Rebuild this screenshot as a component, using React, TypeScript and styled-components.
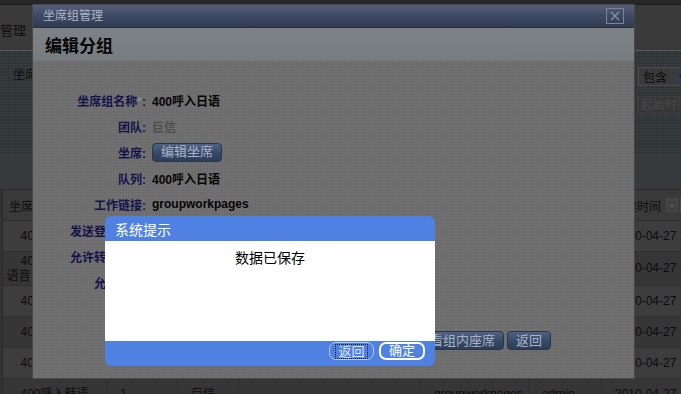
import React from 'react'
import styled, { createGlobalStyle } from 'styled-components'

const GlobalStyle = createGlobalStyle`
  html, body {
    margin: 0;
    padding: 0;
  }
  body {
    width: 681px;
    height: 394px;
    overflow: hidden;
    background: #333;
    font-family: 'Liberation Sans', 'Noto Sans CJK SC', sans-serif;
    font-size: 12px;
  }
`

const dots = `
  background-image: radial-gradient(circle, rgba(255, 255, 255, 0.07) 0.8px, transparent 1.1px);
  background-size: 3px 3px;
`

const Screen = styled.div`
  position: relative;
  width: 681px;
  height: 394px;
  overflow: hidden;
`

/* ---------- page underneath (already dimmed) ---------- */

const Page = styled.div`
  display: flex;
  flex-direction: column;
  width: 681px;
`

const TopStrip = styled.div`
  height: 4px;
  background: #272727;
  border-bottom: 1px solid #1b1b1b;
`

const PageHeader = styled.div`
  box-sizing: border-box;
  height: 46px;
  padding-top: 7px;
  display: flex;
  align-items: center;
  background: #3a3a3a;
  border-bottom: 1px solid #5c5c5c;
`

const PageTitle = styled.h1`
  margin: 0;
  font-size: 13px;
  font-weight: normal;
  color: #0d0d0d;
  line-height: 16px;
`

const FilterPanel = styled.div`
  height: 104px;
  display: flex;
  justify-content: space-between;
  background-color: #2f3437;
  ${dots}
`

const FilterLabel = styled.span`
  padding: 16px 0 0 13px;
  line-height: 17px;
  color: #0b0b0b;
`

const FilterSide = styled.div`
  width: 43px;
  padding-top: 16px;
  display: flex;
  flex-direction: column;
  gap: 10px;
  overflow: hidden;
`

const Select = styled.div`
  box-sizing: border-box;
  width: 60px;
  height: 19px;
  display: flex;
  align-items: center;
  border: 1px solid #4c4c4c;
  background: #3a3a3a;
  color: #080808;
  font-size: 12px;
  padding-left: 4px;
  gap: 7px;
`

const SelectArrow = styled.span`
  width: 14px;
  height: 15px;
  background: #363c48;
  color: #1f2530;
  font-size: 8px;
  line-height: 15px;
  text-align: center;
`

const DateInput = styled.div`
  box-sizing: border-box;
  width: 60px;
  height: 18px;
  border: 1px solid #404040;
  background: #363636;
  color: #4a4a4a;
  padding-left: 2px;
  line-height: 16px;
  white-space: nowrap;
`

const Toolbar = styled.div`
  height: 34px;
  background: #363a3c;
  border-bottom: 1px solid #2c2c2c;
`

const TableGrid = styled.div`
  display: grid;
  grid-template-columns: 104px 71px 61px 182px 108px 73px 160px;
  margin-left: 2px;
  border-left: 1px solid #2a2a2a;
`

const HeadCell = styled.div<{ $pad?: number }>`
  height: 30px;
  display: flex;
  align-items: center;
  justify-content: ${p => (p.$pad !== undefined ? 'flex-start' : 'center')};
  padding-left: ${p => p.$pad ?? 0}px;
  gap: 5px;
  background: #3a3a3a;
  border-right: 1px solid #303030;
  border-bottom: 1px solid #2e2e2e;
  color: #0c0c0c;
  white-space: nowrap;
`

const Cell = styled.div<{ $odd: boolean; $h: number; $center?: boolean }>`
  height: ${p => p.$h}px;
  box-sizing: border-box;
  display: flex;
  align-items: center;
  justify-content: ${p => (p.$center ? 'center' : 'flex-start')};
  text-align: ${p => (p.$center ? 'center' : 'left')};
  padding-left: ${p => (p.$center ? 0 : 13)}px;
  background: ${p => (p.$odd ? '#3d3d3d' : '#363636')};
  border-right: 1px solid #2e2e2e;
  border-bottom: 1px solid #303030;
  color: #0c0c0c;
  line-height: 15px;
  white-space: nowrap;
`

const SortPair = styled.span`
  display: inline-flex;
  gap: 2px;
`

const SortBox = styled.span`
  width: 10px;
  height: 12px;
  border: 1px solid #4a4a4a;
  background: #414141;
  display: flex;
  align-items: center;
  justify-content: center;
`

/* ---------- edit group modal ---------- */

const Modal = styled.section`
  position: absolute;
  left: 33px;
  top: 5px;
  width: 601px;
  height: 373px;
  display: flex;
  flex-direction: column;
  box-shadow: 0 0 0 1px #474747;
`

const ModalTitleBar = styled.div`
  height: 22px;
  flex: none;
  display: flex;
  align-items: center;
  justify-content: space-between;
  padding: 0 10px;
  background: linear-gradient(#56607a, #3f4a64 45%, #313b54);
  border-bottom: 1px solid #2b2f38;
`

const ModalTitle = styled.span`
  color: #aeb6c6;
  font-size: 12px;
  line-height: 14px;
`

const CloseButton = styled.span`
  box-sizing: border-box;
  width: 18px;
  height: 16px;
  border: 1px solid #7c8498;
  display: flex;
  align-items: center;
  justify-content: center;
`

const ModalHeading = styled.h2`
  margin: 0;
  height: 33px;
  flex: none;
  display: flex;
  align-items: center;
  padding-left: 12px;
  background: linear-gradient(#7d8286, #777c81);
  font-size: 17px;
  font-weight: bold;
  color: #050505;
`

const ModalBody = styled.div`
  flex: 1;
  padding-top: 26px;
  display: flex;
  flex-direction: column;
  background-color: #6c6c6c;
  ${dots}
`

const Form = styled.div`
  display: grid;
  grid-template-columns: 113px auto;
  grid-auto-rows: 26px;
  column-gap: 6px;
  align-items: center;
`

const Label = styled.span`
  text-align: right;
  font-weight: bold;
  color: #14124a;
  white-space: nowrap;
`

const Req = styled.span`
  font-weight: normal;
  color: #9a9aa8;
`

const Value = styled.span<{ $muted?: boolean }>`
  font-weight: bold;
  color: ${p => (p.$muted ? '#4e4e4e' : '#050505')};
  white-space: nowrap;
`

const ButtonBar = styled.div`
  margin-top: 36px;
  padding-right: 83px;
  display: flex;
  justify-content: flex-end;
  gap: 3px;
`

const DarkButton = styled.button`
  height: 19px;
  padding: 0 8px;
  border: 1px solid #2a3548;
  border-radius: 4px;
  background: linear-gradient(#4f6384, #364866 55%, #2d3d5a);
  color: #a9b4c7;
  font-family: inherit;
  font-size: 13px;
  line-height: 16px;
  justify-self: start;
`

/* ---------- system prompt dialog ---------- */

const Prompt = styled.div`
  position: absolute;
  left: 105px;
  top: 216px;
  width: 330px;
  height: 150px;
  display: flex;
  flex-direction: column;
  border-radius: 6px;
  overflow: hidden;
  background: #4f81e2;
`

const PromptTitle = styled.div`
  height: 25px;
  flex: none;
  padding-left: 10px;
  display: flex;
  align-items: center;
  color: #fff;
  font-size: 14px;
`

const PromptBody = styled.div`
  flex: 1;
  background: #fff;
  padding-top: 7px;
  text-align: center;
  font-size: 14px;
  line-height: 20px;
  color: #000;
`

const PromptFooter = styled.div`
  height: 25px;
  flex: none;
  box-sizing: border-box;
  padding: 1px 10px 0 0;
  display: flex;
  justify-content: flex-end;
  align-items: flex-start;
  gap: 5px;
`

const PromptButton = styled.button<{ $primary?: boolean }>`
  box-sizing: border-box;
  width: ${p => (p.$primary ? 46 : 45)}px;
  height: 18px;
  padding: 0;
  display: flex;
  align-items: center;
  justify-content: center;
  border: ${p => (p.$primary ? '2px solid #ffffff' : '1px solid #b6c9f2')};
  border-radius: 7px;
  background: #4f81e2;
  color: ${p => (p.$primary ? '#ffffff' : '#dbe4fa')};
  font-family: inherit;
  font-size: 13px;
  line-height: 14px;
`

const FocusRing = styled.span`
  border: 1px dotted #101010;
  padding: 0 2px;
  line-height: 13px;
`

const SortIcons = () => (
  <SortPair>
    {[0, 1].map(i => (
      <SortBox key={i}>
        <svg width="6" height="4" viewBox="0 0 6 4">
          <path d="M0 4 L3 0 L6 4 Z" fill="#565656" />
        </svg>
      </SortBox>
    ))}
  </SortPair>
)

const rows: { name: React.ReactNode; h: number }[] = [
  { name: '400呼入日语', h: 31 },
  { name: <>400呼入英语<br />语音自助服务专组</>, h: 34 },
  { name: '400呼入日语', h: 31 },
  { name: '400呼入英语', h: 31 },
  { name: '400呼入法语', h: 31 },
  { name: '400呼入韩语', h: 31 },
]

export default function App() {
  return (
    <Screen>
      <GlobalStyle />
      <Page>
        <TopStrip />
        <PageHeader>
          <PageTitle>管理</PageTitle>
        </PageHeader>
        <FilterPanel>
          <FilterLabel>坐席</FilterLabel>
          <FilterSide>
            <Select>
              包含
              <SelectArrow>▼</SelectArrow>
            </Select>
            <DateInput>起始时间</DateInput>
          </FilterSide>
        </FilterPanel>
        <Toolbar />
        <TableGrid>
          <HeadCell>
            坐席组名称
            <SortIcons />
          </HeadCell>
          <HeadCell>人数</HeadCell>
          <HeadCell>团队</HeadCell>
          <HeadCell>队列</HeadCell>
          <HeadCell>工作链接</HeadCell>
          <HeadCell>创建人</HeadCell>
          <HeadCell $pad={11}>
            创建时间
            <SortIcons />
          </HeadCell>
          {rows.map((r, i) => (
            <React.Fragment key={i}>
              <Cell $odd={i % 2 === 0} $h={r.h} $center>
                {r.name}
              </Cell>
              <Cell $odd={i % 2 === 0} $h={r.h}>1</Cell>
              <Cell $odd={i % 2 === 0} $h={r.h}>巨信</Cell>
              <Cell $odd={i % 2 === 0} $h={r.h} />
              <Cell $odd={i % 2 === 0} $h={r.h}>groupworkpages</Cell>
              <Cell $odd={i % 2 === 0} $h={r.h}>admin</Cell>
              <Cell $odd={i % 2 === 0} $h={r.h}>2010-04-27 10:21:35</Cell>
            </React.Fragment>
          ))}
        </TableGrid>
      </Page>

      <Modal>
        <ModalTitleBar>
          <ModalTitle>坐席组管理</ModalTitle>
          <CloseButton>
            <svg width="10" height="10" viewBox="0 0 10 10">
              <path d="M1 1 L9 9 M9 1 L1 9" stroke="#8a92a6" strokeWidth="1.3" />
            </svg>
          </CloseButton>
        </ModalTitleBar>
        <ModalHeading>编辑分组</ModalHeading>
        <ModalBody>
          <Form>
            <Label>
              坐席组名称<Req>*</Req>:
            </Label>
            <Value>400呼入日语</Value>
            <Label>团队:</Label>
            <Value $muted>巨信</Value>
            <Label>坐席:</Label>
            <DarkButton>编辑坐席</DarkButton>
            <Label>队列:</Label>
            <Value>400呼入日语</Value>
            <Label>工作链接:</Label>
            <Value>groupworkpages</Value>
            <Label>发送登录短信:</Label>
            <Value>是</Value>
            <Label>允许转接外线:</Label>
            <Value>否</Value>
            <Label>允许外呼:</Label>
            <Value>否</Value>
          </Form>
          <ButtonBar>
            <DarkButton>保存</DarkButton>
            <DarkButton>查看组内座席</DarkButton>
            <DarkButton>返回</DarkButton>
          </ButtonBar>
        </ModalBody>
      </Modal>

      <Prompt>
        <PromptTitle>系统提示</PromptTitle>
        <PromptBody>数据已保存</PromptBody>
        <PromptFooter>
          <PromptButton>
            <FocusRing>返回</FocusRing>
          </PromptButton>
          <PromptButton $primary>确定</PromptButton>
        </PromptFooter>
      </Prompt>
    </Screen>
  )
}
